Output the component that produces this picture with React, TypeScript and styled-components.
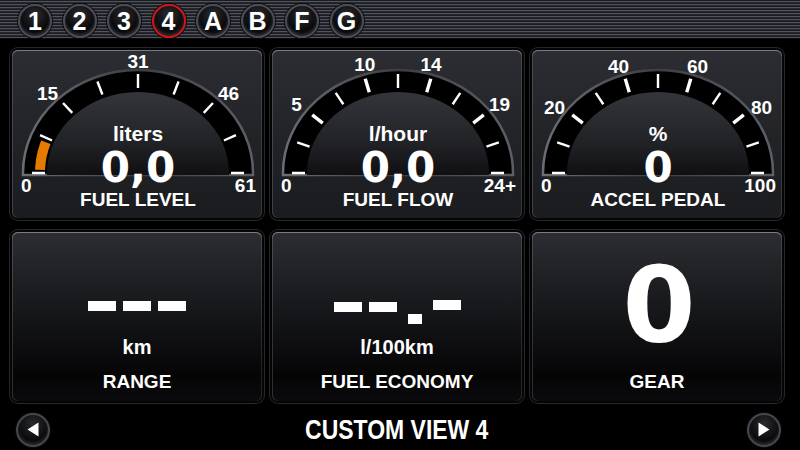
import React from 'react';
import styled, { createGlobalStyle } from 'styled-components';

const GlobalStyle = createGlobalStyle`
  html, body {
    margin: 0;
    padding: 0;
    background: #000;
  }
  body {
    font-family: 'Liberation Sans', Arial, sans-serif;
    color: #fff;
  }
`;

// === gauge geometry (card coordinates) ===
const CX = 126;
const CY = 123;
const RX = 115;
const RY = 103;
const DOME_RX = 91;
const DOME_RY = 81;

interface GaugeLabel {
  text: string;
  angle: number;
}

interface GaugeSpec {
  unit: string;
  value: string;
  name: string;
  ticks: number;
  majors?: number[];
  labels: GaugeLabel[];
  start: string;
  end: string;
  fill?: { from: number; to: number };
}

const gauges: GaugeSpec[] = [
  {
    unit: 'liters',
    value: '0,0',
    name: 'FUEL LEVEL',
    ticks: 9,
    labels: [
      { text: '15', angle: 45 },
      { text: '31', angle: 90 },
      { text: '46', angle: 135 },
    ],
    start: '0',
    end: '61',
    fill: { from: 2, to: 20 },
  },
  {
    unit: 'l/hour',
    value: '0,0',
    name: 'FUEL FLOW',
    ticks: 11,
    majors: [36, 72, 108, 144],
    labels: [
      { text: '5', angle: 37.5 },
      { text: '10', angle: 75 },
      { text: '14', angle: 105 },
      { text: '19', angle: 142.5 },
    ],
    start: '0',
    end: '24+',
  },
  {
    unit: '%',
    value: '0',
    name: 'ACCEL PEDAL',
    ticks: 11,
    majors: [36, 72, 108, 144],
    labels: [
      { text: '20', angle: 36 },
      { text: '40', angle: 72 },
      { text: '60', angle: 108 },
      { text: '80', angle: 144 },
    ],
    start: '0',
    end: '100',
  },
];

const pt = (deg: number, rx: number, ry: number): [number, number] => {
  const r = (deg * Math.PI) / 180;
  return [CX - rx * Math.cos(r), CY - ry * Math.sin(r)];
};

const halfEllipse = (rx: number, ry: number) =>
  `M ${CX - rx} ${CY + 2} L ${CX - rx} ${CY} A ${rx} ${ry} 0 0 1 ${CX + rx} ${CY} L ${CX + rx} ${CY + 2} Z`;

const arcBand = (from: number, to: number, inner: [number, number], outer: [number, number]) => {
  const pts: string[] = [];
  for (let a = from; a <= to; a += 1) {
    const [x, y] = pt(a, outer[0], outer[1]);
    pts.push(`${x.toFixed(1)},${y.toFixed(1)}`);
  }
  for (let a = to; a >= from; a -= 1) {
    const [x, y] = pt(a, inner[0], inner[1]);
    pts.push(`${x.toFixed(1)},${y.toFixed(1)}`);
  }
  return pts.join(' ');
};

const GaugeDrawing: React.FC<{ spec: GaugeSpec; id: number }> = ({ spec, id }) => {
  const step = 180 / (spec.ticks - 1);
  const ticks = Array.from({ length: spec.ticks }, (_, i) => i * step);
  const labelStyle = {
    fontFamily: "'Liberation Sans', Arial, sans-serif",
    fontWeight: 700,
    fontSize: 19,
  };

  return (
    <GaugeSvg width={250} height={168} viewBox="0 0 250 168">
      <defs>
        <linearGradient id={`dome${id}`} x1="0" y1="0" x2="0" y2="1">
          <stop offset="0" stopColor="#34353a" />
          <stop offset="0.6" stopColor="#222327" />
          <stop offset="1" stopColor="#101012" />
        </linearGradient>
        <linearGradient id={`rim${id}`} x1="0" y1="0" x2="1" y2="0">
          <stop offset="0" stopColor="#6a6d73" />
          <stop offset="0.5" stopColor="#3c3e43" />
          <stop offset="1" stopColor="#5c5f65" />
        </linearGradient>
      </defs>

      <path d={halfEllipse(RX, RY)} fill="#000" stroke={`url(#rim${id})`} strokeWidth={2.5} />
      <path d={halfEllipse(DOME_RX, DOME_RY)} fill={`url(#dome${id})`} />

      {spec.fill && (
        <polygon
          points={arcBand(spec.fill.from, spec.fill.to, [93, 85], [103, 95])}
          fill="#e57a00"
        />
      )}

      {ticks.map(a => {
        const [x1, y1] = pt(a, 93, 85);
        const [x2, y2] = pt(a, 106, 99);
        const major = spec.majors?.some(m => Math.abs(m - a) < 0.1);
        return (
          <line
            key={a}
            x1={x1}
            y1={y1}
            x2={x2}
            y2={y2}
            stroke="#fff"
            strokeWidth={major ? 3.4 : 2.4}
          />
        );
      })}

      {spec.labels.map(l => {
        const [x, y] = pt(l.angle, 128, 112);
        return (
          <text key={l.text} x={x} y={y} fill="#fff" textAnchor="middle" dominantBaseline="central" style={labelStyle}>
            {l.text}
          </text>
        );
      })}
      <text x={CX - 117} y={CY + 19} fill="#fff" textAnchor="start" style={labelStyle}>
        {spec.start}
      </text>
      <text x={CX + 118} y={CY + 19} fill="#fff" textAnchor="end" style={labelStyle}>
        {spec.end}
      </text>
    </GaugeSvg>
  );
};

const pages = ['1', '2', '3', '4', 'A', 'B', 'F', 'G'];

const App: React.FC = () => {
  return (
    <>
      <GlobalStyle />
      <Screen>
        <TopBar>
          {pages.map(p => (
            <PageButton key={p} $active={p === '4'}>
              {p}
            </PageButton>
          ))}
        </TopBar>

        <CardGrid>
          {gauges.map((g, i) => (
            <GaugeCard key={g.name}>
              <GaugeDrawing spec={g} id={i} />
              <Readout>
                <GaugeUnit>{g.unit}</GaugeUnit>
                <GaugeValue>{g.value}</GaugeValue>
                <CardName>{g.name}</CardName>
              </Readout>
            </GaugeCard>
          ))}

          <BigCard>
            <ValueRow>
              <Dash />
              <Dash />
              <Dash />
            </ValueRow>
            <BigUnit>km</BigUnit>
            <CardName>RANGE</CardName>
          </BigCard>

          <BigCard>
            <ValueRow>
              <Dash $offset={2} />
              <Dash $offset={2} />
              <Dot />
              <Dash $offset={0} />
            </ValueRow>
            <BigUnit>l/100km</BigUnit>
            <CardName>FUEL ECONOMY</CardName>
          </BigCard>

          <BigCard>
            <ValueRow>
              <GearValue>0</GearValue>
            </ValueRow>
            <BigUnit />
            <CardName>GEAR</CardName>
          </BigCard>
        </CardGrid>

        <BottomBar>
          <ArrowButton aria-label="previous">
            <svg width="12" height="15" viewBox="0 0 12 15">
              <path d="M11.5 0.5 L0.5 7.5 L11.5 14.5 Z" fill="#fff" />
            </svg>
          </ArrowButton>
          <ViewTitle>CUSTOM VIEW 4</ViewTitle>
          <ArrowButton aria-label="next">
            <svg width="12" height="15" viewBox="0 0 12 15">
              <path d="M0.5 0.5 L11.5 7.5 L0.5 14.5 Z" fill="#fff" />
            </svg>
          </ArrowButton>
        </BottomBar>
      </Screen>
    </>
  );
};

// === STYLED COMPONENTS ===

const Screen = styled.div`
  width: 800px;
  height: 450px;
  background: #000;
  display: flex;
  flex-direction: column;
  overflow: hidden;
`;

const TopBar = styled.div`
  height: 39px;
  flex-shrink: 0;
  box-sizing: border-box;
  padding: 4px 0 0 18px;
  display: flex;
  gap: 10.5px;
  background: repeating-linear-gradient(
    to bottom,
    #1b1c21 0px,
    #1b1c21 1px,
    #51545c 1px,
    #51545c 2px,
    #26282e 2px,
    #26282e 3px
  );
  border-bottom: 1px solid #0a0a0c;
`;

const PageButton = styled.div<{ $active?: boolean }>`
  width: 34px;
  height: 34px;
  box-sizing: border-box;
  border-radius: 50%;
  border: 2px solid ${p => (p.$active ? '#d2141a' : '#4a4d54')};
  background: radial-gradient(circle at 50% 30%, #2c2d31 0%, #0c0c0e 55%, #000 100%);
  box-shadow: 0 0 0 1px #0b0b0d, inset 0 -2px 3px rgba(120, 124, 132, 0.35);
  display: flex;
  align-items: center;
  justify-content: center;
  color: #fff;
  font-family: 'Liberation Sans', Arial, sans-serif;
  font-weight: 700;
  font-size: 25px;
  line-height: 1;
  padding-top: 1px;
`;

const CardGrid = styled.div`
  display: grid;
  grid-template-columns: repeat(3, 250px);
  grid-template-rows: 168px 169px;
  column-gap: 10px;
  row-gap: 14px;
  padding: 11px 0 0 12px;
`;

const cardFrame = `
  border-radius: 6px;
  box-shadow:
    0 0 0 2px #050506,
    0 0 0 3px #26272a,
    inset 0 1px 0 rgba(255, 255, 255, 0.38),
    inset 1px 0 0 rgba(255, 255, 255, 0.16),
    inset -1px 0 0 rgba(255, 255, 255, 0.12);
`;

const GaugeCard = styled.div`
  position: relative;
  ${cardFrame}
  background: linear-gradient(to bottom, #2b2d32 0%, #212226 60%, #1b1c20 100%);
  overflow: hidden;
`;

const GaugeSvg = styled.svg`
  position: absolute;
  top: 0;
  left: 0;
`;

const Readout = styled.div`
  position: relative;
  display: flex;
  flex-direction: column;
  align-items: center;
  padding-top: 72px;
  margin-left: 2px;
`;

const GaugeUnit = styled.div`
  font-family: 'Liberation Sans', Arial, sans-serif;
  font-weight: 700;
  font-size: 21px;
  line-height: 24px;
  color: #fff;
`;

const GaugeValue = styled.div`
  margin-top: 2px;
  font-family: 'DejaVu Sans', sans-serif;
  font-weight: 700;
  font-size: 42px;
  line-height: 40px;
  color: #fff;
`;

const CardName = styled.div`
  margin-top: 2px;
  font-family: 'Liberation Sans', Arial, sans-serif;
  font-weight: 700;
  font-size: 19px;
  line-height: 20px;
  color: #fff;
  white-space: nowrap;
`;

const BigCard = styled.div`
  ${cardFrame}
  background: linear-gradient(to bottom, #2b2d32 0%, #17181b 45%, #050506 85%, #0b0b0d 100%);
  display: flex;
  flex-direction: column;
  align-items: center;
  padding-top: 43px;
  box-sizing: border-box;
`;

const ValueRow = styled.div`
  height: 62px;
  display: flex;
  align-items: center;
  justify-content: center;
  gap: 7px;
`;

const Dash = styled.span<{ $offset?: number }>`
  display: block;
  width: 28px;
  height: 10px;
  background: #fff;
  position: relative;
  top: ${p => (p.$offset !== undefined ? p.$offset - 1 : 0)}px;
`;

const Dot = styled.span`
  display: block;
  width: 14px;
  height: 10px;
  background: #fff;
  margin: 0 4px 0 4px;
  position: relative;
  top: 13px;
`;

const GearValue = styled.div`
  font-family: 'DejaVu Sans', sans-serif;
  font-weight: 700;
  font-size: 105px;
  line-height: 62px;
  color: #fff;
  margin-left: 4px;
`;

const BigUnit = styled.div`
  height: 20px;
  font-family: 'Liberation Sans', Arial, sans-serif;
  font-weight: 700;
  font-size: 20px;
  line-height: 20px;
  color: #fff;
  margin-bottom: 13px;
`;

const BottomBar = styled.div`
  flex: 1;
  display: flex;
  align-items: center;
  justify-content: space-between;
  padding: 8px 19px 0 16px;
`;

const ArrowButton = styled.div`
  width: 34px;
  height: 34px;
  box-sizing: border-box;
  border-radius: 50%;
  border: 2px solid #45484f;
  background: radial-gradient(circle at 50% 30%, #2a2b2f 0%, #0b0b0d 60%, #000 100%);
  box-shadow: 0 0 0 1px #0b0b0d, inset 0 -2px 3px rgba(120, 124, 132, 0.3);
  display: flex;
  align-items: center;
  justify-content: center;
`;

const ViewTitle = styled.div`
  font-family: 'Liberation Sans', Arial, sans-serif;
  font-weight: 700;
  font-size: 28px;
  line-height: 30px;
  color: #fff;
  transform: scaleX(0.82);
  margin-right: 3px;
`;

export default App;
